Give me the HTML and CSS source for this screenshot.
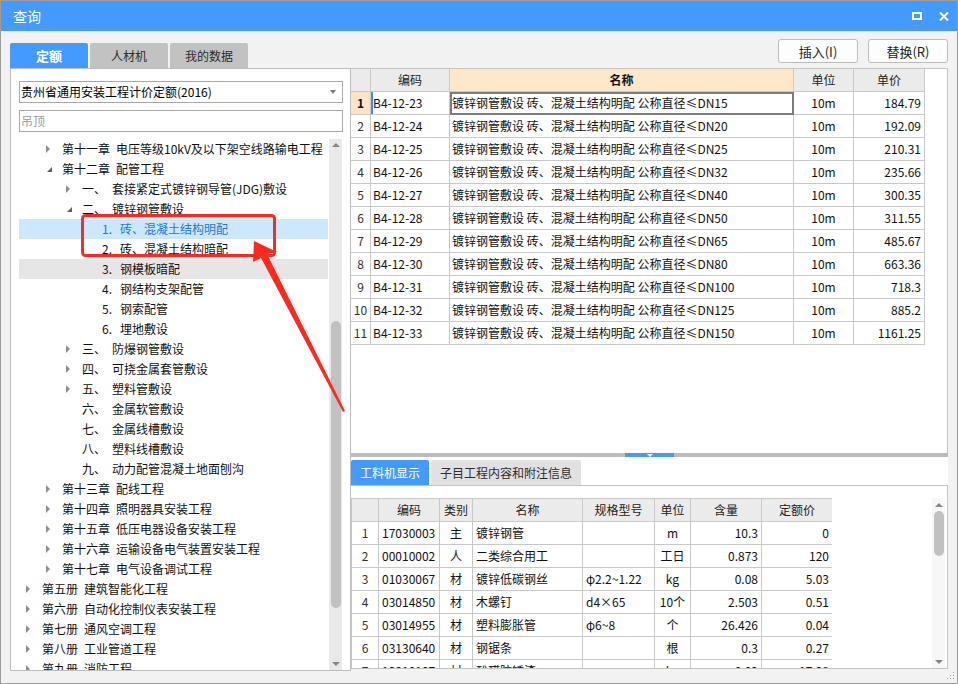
FILE: index.html
```html
<!DOCTYPE html>
<html lang="zh-CN">
<head>
<meta charset="utf-8">
<title>查询</title>
<link rel="stylesheet" href="styles.css">
</head>
<body>
<div class="window">
  <div class="titlebar">
    <span class="title">查询</span>
    <div class="winbtns">
      <svg width="10" height="8" viewBox="0 0 10 8"><rect x="1" y="1" width="8" height="6" fill="none" stroke="#fff" stroke-width="2"/></svg>
      <svg width="10" height="9" viewBox="0 0 10 9"><path d="M1 0.5 L9 8.5 M9 0.5 L1 8.5" stroke="#fff" stroke-width="2"/></svg>
    </div>
  </div>
  <div class="content">
    <div class="toolbar">
      <div class="tabs">
        <div class="tab active">定额</div>
        <div class="tab">人材机</div>
        <div class="tab">我的数据</div>
      </div>
      <div class="actions">
        <button class="btn">插入(I)</button>
        <button class="btn">替换(R)</button>
      </div>
    </div>
    <div class="main">
      <div class="left">
        <div class="select">
          <span>贵州省通用安装工程计价定额(2016)</span>
          <i class="caret"></i>
        </div>
        <div class="search">吊顶</div>
        <div class="tree">
          <div class="rows">
            <div class="row l1"><i class="tg c"></i><span class="pre">第十一章</span>电压等级10kV及以下架空线路输电工程</div>
            <div class="row l1"><i class="tg e"></i><span class="pre">第十二章</span>配管工程</div>
            <div class="row l2"><i class="tg c"></i><span class="num">一、</span>套接紧定式镀锌钢导管(JDG)敷设</div>
            <div class="row l2"><i class="tg e"></i><span class="num">二、</span>镀锌钢管敷设</div>
            <div class="row l3 sel"><span class="num">1.</span>砖、混凝土结构明配</div>
            <div class="row l3"><span class="num">2.</span>砖、混凝土结构暗配</div>
            <div class="row l3 hov"><span class="num">3.</span>钢模板暗配</div>
            <div class="row l3"><span class="num">4.</span>钢结构支架配管</div>
            <div class="row l3"><span class="num">5.</span>钢索配管</div>
            <div class="row l3"><span class="num">6.</span>埋地敷设</div>
            <div class="row l2"><i class="tg c"></i><span class="num">三、</span>防爆钢管敷设</div>
            <div class="row l2"><i class="tg c"></i><span class="num">四、</span>可挠金属套管敷设</div>
            <div class="row l2"><i class="tg c"></i><span class="num">五、</span>塑料管敷设</div>
            <div class="row l2"><i class="tg"></i><span class="num">六、</span>金属软管敷设</div>
            <div class="row l2"><i class="tg"></i><span class="num">七、</span>金属线槽敷设</div>
            <div class="row l2"><i class="tg"></i><span class="num">八、</span>塑料线槽敷设</div>
            <div class="row l2"><i class="tg"></i><span class="num">九、</span>动力配管混凝土地面刨沟</div>
            <div class="row l1"><i class="tg c"></i><span class="pre">第十三章</span>配线工程</div>
            <div class="row l1"><i class="tg c"></i><span class="pre">第十四章</span>照明器具安装工程</div>
            <div class="row l1"><i class="tg c"></i><span class="pre">第十五章</span>低压电器设备安装工程</div>
            <div class="row l1"><i class="tg c"></i><span class="pre">第十六章</span>运输设备电气装置安装工程</div>
            <div class="row l1"><i class="tg c"></i><span class="pre">第十七章</span>电气设备调试工程</div>
            <div class="row l0"><i class="tg c"></i><span class="pre">第五册</span>建筑智能化工程</div>
            <div class="row l0"><i class="tg c"></i><span class="pre">第六册</span>自动化控制仪表安装工程</div>
            <div class="row l0"><i class="tg c"></i><span class="pre">第七册</span>通风空调工程</div>
            <div class="row l0"><i class="tg c"></i><span class="pre">第八册</span>工业管道工程</div>
            <div class="row l0"><i class="tg c"></i><span class="pre">第九册</span>消防工程</div>
          </div>
          <div class="vsb tree-sb">
            <div class="sb-btn"><i class="up"></i></div>
            <div class="sb-gap"></div>
            <div class="sb-thumb"></div>
            <div class="sb-fill"></div>
            <div class="sb-btn"><i class="down"></i></div>
          </div>
        </div>
      </div>
      <div class="right">
        <div class="top-sec">
          <table class="grid top">
            <colgroup><col class="w20"><col class="w79"><col class="w344"><col class="w60"><col class="w71"></colgroup>
            <thead>
              <tr><th></th><th>编码</th><th class="hl">名称</th><th>单位</th><th>单价</th></tr>
            </thead>
            <tbody>
              <tr class="cur"><td class="rn">1</td><td class="tl mark">B4-12-23</td><td class="tl focus">镀锌钢管敷设 砖、混凝土结构明配 公称直径≤DN15</td><td class="tc">10m</td><td class="tr">184.79</td></tr>
              <tr><td class="rn">2</td><td class="tl">B4-12-24</td><td class="tl">镀锌钢管敷设 砖、混凝土结构明配 公称直径≤DN20</td><td class="tc">10m</td><td class="tr">192.09</td></tr>
              <tr><td class="rn">3</td><td class="tl">B4-12-25</td><td class="tl">镀锌钢管敷设 砖、混凝土结构明配 公称直径≤DN25</td><td class="tc">10m</td><td class="tr">210.31</td></tr>
              <tr><td class="rn">4</td><td class="tl">B4-12-26</td><td class="tl">镀锌钢管敷设 砖、混凝土结构明配 公称直径≤DN32</td><td class="tc">10m</td><td class="tr">235.66</td></tr>
              <tr><td class="rn">5</td><td class="tl">B4-12-27</td><td class="tl">镀锌钢管敷设 砖、混凝土结构明配 公称直径≤DN40</td><td class="tc">10m</td><td class="tr">300.35</td></tr>
              <tr><td class="rn">6</td><td class="tl">B4-12-28</td><td class="tl">镀锌钢管敷设 砖、混凝土结构明配 公称直径≤DN50</td><td class="tc">10m</td><td class="tr">311.55</td></tr>
              <tr><td class="rn">7</td><td class="tl">B4-12-29</td><td class="tl">镀锌钢管敷设 砖、混凝土结构明配 公称直径≤DN65</td><td class="tc">10m</td><td class="tr">485.67</td></tr>
              <tr><td class="rn">8</td><td class="tl">B4-12-30</td><td class="tl">镀锌钢管敷设 砖、混凝土结构明配 公称直径≤DN80</td><td class="tc">10m</td><td class="tr">663.36</td></tr>
              <tr><td class="rn">9</td><td class="tl">B4-12-31</td><td class="tl">镀锌钢管敷设 砖、混凝土结构明配 公称直径≤DN100</td><td class="tc">10m</td><td class="tr">718.3</td></tr>
              <tr><td class="rn">10</td><td class="tl">B4-12-32</td><td class="tl">镀锌钢管敷设 砖、混凝土结构明配 公称直径≤DN125</td><td class="tc">10m</td><td class="tr">885.2</td></tr>
              <tr><td class="rn">11</td><td class="tl">B4-12-33</td><td class="tl">镀锌钢管敷设 砖、混凝土结构明配 公称直径≤DN150</td><td class="tc">10m</td><td class="tr">1161.25</td></tr>
            </tbody>
          </table>
        </div>
        <div class="splitter"><div class="handle"><i class="hdown"></i></div></div>
        <div class="bottom-sec">
          <div class="btabs">
            <div class="btab active">工料机显示</div>
            <div class="btab wide">子目工程内容和附注信息</div>
          </div>
          <div class="bbox">
            <div class="bwrap">
              <table class="grid bottom">
                <colgroup><col class="w27"><col class="w61"><col class="w33"><col class="w110"><col class="w72"><col class="w36"><col class="w71"><col class="w71"></colgroup>
                <thead>
                  <tr><th></th><th>编码</th><th>类别</th><th>名称</th><th>规格型号</th><th>单位</th><th>含量</th><th>定额价</th></tr>
                </thead>
                <tbody>
                  <tr><td class="rn">1</td><td class="tl">17030003</td><td class="tc">主</td><td class="tl">镀锌钢管</td><td class="tl"></td><td class="tc">m</td><td class="tr">10.3</td><td class="tr">0</td></tr>
                  <tr><td class="rn">2</td><td class="tl">00010002</td><td class="tc">人</td><td class="tl">二类综合用工</td><td class="tl"></td><td class="tc">工日</td><td class="tr">0.873</td><td class="tr">120</td></tr>
                  <tr><td class="rn">3</td><td class="tl">01030067</td><td class="tc">材</td><td class="tl">镀锌低碳钢丝</td><td class="tl">φ2.2~1.22</td><td class="tc">kg</td><td class="tr">0.08</td><td class="tr">5.03</td></tr>
                  <tr><td class="rn">4</td><td class="tl">03014850</td><td class="tc">材</td><td class="tl">木螺钉</td><td class="tl">d4×65</td><td class="tc">10个</td><td class="tr">2.503</td><td class="tr">0.51</td></tr>
                  <tr><td class="rn">5</td><td class="tl">03014955</td><td class="tc">材</td><td class="tl">塑料膨胀管</td><td class="tl">φ6~8</td><td class="tc">个</td><td class="tr">26.426</td><td class="tr">0.04</td></tr>
                  <tr><td class="rn">6</td><td class="tl">03130640</td><td class="tc">材</td><td class="tl">钢锯条</td><td class="tl"></td><td class="tc">根</td><td class="tr">0.3</td><td class="tr">0.27</td></tr>
                  <tr><td class="rn">7</td><td class="tl">13010107</td><td class="tc">材</td><td class="tl">酚醛防锈漆</td><td class="tl"></td><td class="tc">kg</td><td class="tr">0.02</td><td class="tr">17.38</td></tr>
                </tbody>
              </table>
            </div>
            <div class="vsb bottom-sb">
              <div class="sb-btn"><i class="up"></i></div>
              <div class="sb-thumb"></div>
              <div class="sb-fill"></div>
              <div class="sb-btn"><i class="down"></i></div>
            </div>
          </div>
        </div>
      </div>
    </div>
  </div>
  <svg class="grip" width="8" height="8" viewBox="0 0 8 8"><g fill="#a0a0a0"><rect x="6" y="0" width="1" height="1"/><rect x="3" y="3" width="1" height="1"/><rect x="6" y="3" width="1" height="1"/><rect x="0" y="6" width="1" height="1"/><rect x="3" y="6" width="1" height="1"/><rect x="6" y="6" width="1" height="1"/></g></svg>
  <svg class="annot" width="958" height="684" viewBox="0 0 958 684">
    <rect x="82.5" y="215.5" width="192" height="40" rx="3" ry="3" fill="none" stroke="#ff2a1f" stroke-width="3"/>
    <polygon points="254,241 277,252 267,254 345,411 343,412 261,258 253,262" fill="#ff2a1f"/>
  </svg>
</div>
</body>
</html>
```

FILE: styles.css
```css
* { box-sizing: border-box; margin: 0; padding: 0; }
body {
  margin: 0;
  background: #fff;
  font-family: "Noto Sans CJK SC", "Noto Sans", sans-serif;
  font-size: 12px;
  color: #000;
}
.window {
  position: relative;
  width: 958px;
  height: 684px;
  border: 1px solid #9c9c9c;
  background: #f2f2f2;
  display: flex;
  flex-direction: column;
  overflow: hidden;
}
.titlebar {
  flex: none;
  height: 30px;
  background: #459aff;
  color: #fff;
  display: flex;
  align-items: center;
  justify-content: space-between;
  padding: 0 8px 0 12px;
}
.title { font-size: 14px; line-height: 30px; }
.winbtns { display: flex; align-items: center; gap: 17px; }
.winbtns svg { display: block; }

.content { flex: 1; display: flex; flex-direction: column; padding: 0 9px; }
.toolbar { flex: none; height: 37px; display: flex; justify-content: space-between; }
.tabs { display: flex; gap: 2px; align-self: flex-end; }
.tab {
  width: 78px;
  height: 25px;
  line-height: 25px;
  text-align: center;
  background: #c2c2c2;
  color: #2b2b2b;
  border-radius: 2px 2px 0 0;
  font-size: 12px;
}
.tab.active { background: #459aff; color: #fff; font-weight: bold; font-size: 13px; }
.actions { display: flex; gap: 10px; padding-top: 8px; }
.btn {
  width: 80px;
  height: 24px;
  border: 1px solid #bcbcbc;
  border-radius: 3px;
  background: #fdfdfd;
  font-family: inherit;
  font-size: 13px;
  color: #222;
}

.main {
  height: 603px;
  display: grid;
  grid-template-columns: 341px 597px;
  align-items: start;
}

/* left pane */
.left {
  height: 603px;
  border: 1px solid #bdbdbd;
  background: #fff;
  padding: 12px 7px 0 8px;
  display: flex;
  flex-direction: column;
}
.select {
  flex: none;
  height: 22px;
  border: 1px solid #a9a9a9;
  display: flex;
  align-items: center;
  justify-content: space-between;
  padding: 0 6px 0 1px;
  line-height: 20px;
}
.caret {
  width: 0; height: 0;
  border-left: 3px solid transparent;
  border-right: 3px solid transparent;
  border-top: 4px solid #7a7a7a;
}
.search {
  flex: none;
  margin-top: 7px;
  height: 22px;
  border: 1px solid #a9a9a9;
  color: #9a9a9a;
  line-height: 20px;
  padding-left: 1px;
}
.tree { flex: 1; margin-top: 7px; display: flex; overflow: hidden; min-height: 0; }
.rows { flex: 1; overflow: hidden; }
.row {
  height: 20px;
  line-height: 20px;
  white-space: nowrap;
  display: flex;
  align-items: center;
  color: #111;
}
.l0 { padding-left: 3px; }
.l1 { padding-left: 23px; }
.l2 { padding-left: 43px; }
.l3 { padding-left: 83px; }
.tg { flex: none; width: 20px; height: 20px; position: relative; }
.tg.c::before {
  content: "";
  position: absolute;
  left: 4px; top: 6px;
  border-left: 4px solid #8f8f8f;
  border-top: 4px solid transparent;
  border-bottom: 4px solid transparent;
}
.tg.e::before {
  content: "";
  position: absolute;
  left: 5px; top: 8px;
  border-bottom: 5px solid #5e5e5e;
  border-left: 5px solid transparent;
}
.pre { margin-right: 6px; }
.num { display: inline-block; width: 30px; flex: none; }
.l3 .num { width: 18px; }
.sel { background: #cce8ff; color: #1f74e6; }
.hov { background: #e6e6e6; }

/* scrollbars */
.vsb { flex: none; width: 13px; display: flex; flex-direction: column; align-items: center; }
.tree-sb { background: #e9e9e9; margin: 0 1px; }
.sb-btn { flex: none; height: 12px; width: 13px; display: flex; align-items: center; justify-content: center; }
.up { width: 0; height: 0; border-left: 4px solid transparent; border-right: 4px solid transparent; border-bottom: 4px solid #858585; }
.down { width: 0; height: 0; border-left: 4px solid transparent; border-right: 4px solid transparent; border-top: 4px solid #858585; }
.sb-gap { flex: none; height: 170px; }
.sb-thumb { flex: none; width: 10px; height: 287px; background: #c1c1c1; border-radius: 5px; }
.sb-fill { flex: 1; }

/* right pane */
.right { height: 601px; display: flex; flex-direction: column; }
.top-sec {
  flex: none;
  height: 385px;
  background: #fff;
  border-top: 1px solid #c4c4c4;
  border-right: 1px solid #c4c4c4;
}
.splitter { flex: none; height: 4px; background: #bcbcbc; display: flex; justify-content: center; }
.handle { width: 49px; height: 4px; background: #459aff; display: flex; justify-content: center; align-items: center; }
.hdown { width: 0; height: 0; border-left: 3px solid transparent; border-right: 3px solid transparent; border-top: 3px solid #fff; }
.bottom-sec { flex: 1; background: #fff; padding-top: 3px; display: flex; flex-direction: column; }
.btabs { flex: none; display: flex; gap: 2px; height: 25px; }
.btab { width: 78px; height: 25px; line-height: 25px; text-align: center; background: #e1e1e1; color: #2b2b2b; border-radius: 2px 2px 0 0; }
.btab.active { background: #459aff; color: #fff; }
.btab.wide { width: 150px; }
.bbox {
  flex: none;
  height: 184px;
  border-top: 1px solid #c4c4c4;
  border-right: 1px solid #c4c4c4;
  border-bottom: 1px solid #c4c4c4;
  padding-top: 12px;
  display: flex;
  justify-content: space-between;
}
.bwrap { width: 481px; overflow: hidden; }
.bottom-sb { background: #f7f7f7; margin-right: 2px; }
.bottom-sb .sb-btn { height: 13px; }
.bottom-sb .sb-thumb { height: 45px; }

/* grids */
.grid { border-collapse: separate; border-spacing: 0; table-layout: fixed; }
.grid.top { width: 574px; }
.grid.bottom { width: 481px; border-left: 1px solid #c8c8c8; border-top: 1px solid #c8c8c8; }
.grid th, .grid td {
  height: 23px;
  padding: 0;
  border-right: 1px solid #c8c8c8;
  border-bottom: 1px solid #c8c8c8;
  font-weight: normal;
  white-space: nowrap;
  overflow: hidden;
  line-height: 22px;
  color: #111;
}
.grid th { background: #ebebeb; text-align: center; color: #222; }
.grid th.hl { background: #ffe7c9; font-weight: bold; color: #111; }
.w20 { width: 20px; } .w79 { width: 79px; } .w344 { width: 344px; } .w60 { width: 60px; } .w71 { width: 71px; }
.w27 { width: 27px; } .w61 { width: 61px; } .w33 { width: 33px; } .w110 { width: 110px; } .w72 { width: 72px; } .w36 { width: 36px; }
.grid td.rn { text-align: center; color: #333; }
.grid td.tl { text-align: left; padding-left: 2px; }
.grid td.tc { text-align: center; }
.grid td.tr { text-align: right; padding-right: 3px; }
.grid.bottom td.tl { padding-left: 3px; }
.cur td.rn { background: #fde4c6; font-weight: bold; color: #111; }
.grid td.mark { box-shadow: inset 2px 0 0 #3f8cf3; }
.grid td.focus { outline: 2px solid #7d7d7d; outline-offset: -2px; }

.grip { position: absolute; right: 2px; bottom: 3px; }
.annot { position: absolute; left: -1px; top: -1px; pointer-events: none; }
```
